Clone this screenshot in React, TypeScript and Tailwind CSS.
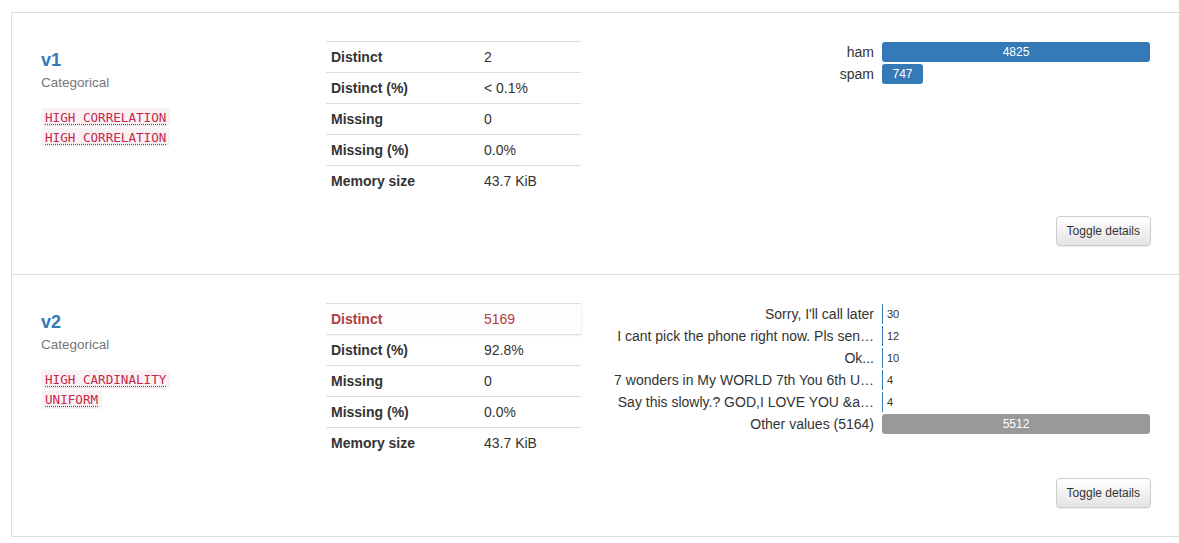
import React from "react";

type Bar = { label: string; value: number; other?: boolean };

const Badge = ({ text }: { text: string }) => (
  <div className="h-[20px]">
    <span
      className="inline-block px-[4px] py-[2px] leading-[15px] text-[12.6px] text-[#c7254e] bg-[#f9f2f4] rounded-[4px] underline decoration-dotted decoration-[#c7254e] underline-offset-2"
      style={{ fontFamily: '"DejaVu Sans Mono", "Liberation Mono", monospace' }}
    >
      {text}
    </span>
  </div>
);

const StatTable = ({ rows, alertFirst }: { rows: [string, string][]; alertFirst?: boolean }) => (
  <table className="w-[255px] border-collapse text-[14px] leading-[20px]">
    <tbody>
      {rows.map(([k, v], i) => {
        const alert = alertFirst && i === 0;
        return (
          <tr
            key={k}
            className={`border-t border-[#dddddd] ${alert ? "bg-[#fdfdfd] shadow-[1px_1px_2px_rgba(0,0,0,0.06)]" : ""}`}
          >
            <th className={`w-[153px] p-[5px] text-left font-bold ${alert ? "text-[#b0403e]" : "text-[#333333]"}`}>{k}</th>
            <td className={`p-[5px] ${alert ? "text-[#b0403e]" : "text-[#333333]"}`}>{v}</td>
          </tr>
        );
      })}
    </tbody>
  </table>
);

const Bars = ({ bars }: { bars: Bar[] }) => {
  const max = Math.max(...bars.map((b) => b.value));
  return (
    <div className="ml-[15px] flex flex-col">
      {bars.map((b) => {
        const w = Math.max(1, Math.round((b.value / max) * 268));
        const wide = w > 30;
        return (
          <div key={b.label} className="flex h-[22px] items-center">
            <div className="w-[286px] pr-[8px] text-right text-[14px] text-[#333333] whitespace-nowrap overflow-hidden">
              {b.label}
            </div>
            <div className="flex w-[268px] items-center">
              <div
                className={`flex h-[20px] items-center justify-center ${wide ? "rounded-[3px]" : ""} ${
                  b.other ? "bg-[#999999]" : "bg-[#337ab7]"
                } text-[12px] text-white`}
                style={{ width: w }}
              >
                {wide ? b.value : null}
              </div>
              {!wide && <span className="ml-[4px] text-[11px] text-[#333333]">{b.value}</span>}
            </div>
          </div>
        );
      })}
    </div>
  );
};

const Row = ({
  name,
  badges,
  rows,
  bars,
  alertFirst,
}: {
  name: string;
  badges: string[];
  rows: [string, string][];
  bars: Bar[];
  alertFirst?: boolean;
}) => (
  <div className="h-[262px] border-b border-[#dddddd] pt-[28px] pl-[29px]">
    <div className="flex h-[155px]">
      <div className="w-[285px] pt-[9px]">
        <div className="text-[18px] font-bold leading-[20px] text-[#337ab7]">{name}</div>
        <div className="mt-[4px] text-[13.5px] leading-[18px] text-[#777777]">Categorical</div>
        <div className="mt-[13px]">
          {badges.map((b, i) => (
            <Badge key={i} text={b} />
          ))}
        </div>
      </div>
      <StatTable rows={rows} alertFirst={alertFirst} />
      <Bars bars={bars} />
    </div>
    <div className="mt-[20px] flex w-[1110px] justify-end">
      <button className="h-[30px] rounded-[4px] border border-[#cccccc] bg-gradient-to-b from-white to-[#e4e4e4] px-[10px] text-[12px] text-[#333333] shadow-[0_1px_1px_rgba(0,0,0,0.075)]">
        Toggle details
      </button>
    </div>
  </div>
);

export default function App() {
  return (
    <div
      className="h-[543px] w-[1179px] overflow-hidden bg-white"
      style={{ fontFamily: '"Liberation Sans", Arial, sans-serif' }}
    >
      <div className="ml-[11px] mt-[12px] w-[1200px] border-l border-t border-[#dddddd]">
        <Row
          name="v1"
          badges={["HIGH CORRELATION", "HIGH CORRELATION"]}
          rows={[
            ["Distinct", "2"],
            ["Distinct (%)", "< 0.1%"],
            ["Missing", "0"],
            ["Missing (%)", "0.0%"],
            ["Memory size", "43.7 KiB"],
          ]}
          bars={[
            { label: "ham", value: 4825 },
            { label: "spam", value: 747 },
          ]}
        />
        <Row
          name="v2"
          badges={["HIGH CARDINALITY", "UNIFORM"]}
          alertFirst
          rows={[
            ["Distinct", "5169"],
            ["Distinct (%)", "92.8%"],
            ["Missing", "0"],
            ["Missing (%)", "0.0%"],
            ["Memory size", "43.7 KiB"],
          ]}
          bars={[
            { label: "Sorry, I'll call later", value: 30 },
            { label: "I cant pick the phone right now. Pls sen…", value: 12 },
            { label: "Ok...", value: 10 },
            { label: "7 wonders in My WORLD 7th You 6th U…", value: 4 },
            { label: "Say this slowly.? GOD,I LOVE YOU &a…", value: 4 },
            { label: "Other values (5164)", value: 5512, other: true },
          ]}
        />
      </div>
    </div>
  );
}
